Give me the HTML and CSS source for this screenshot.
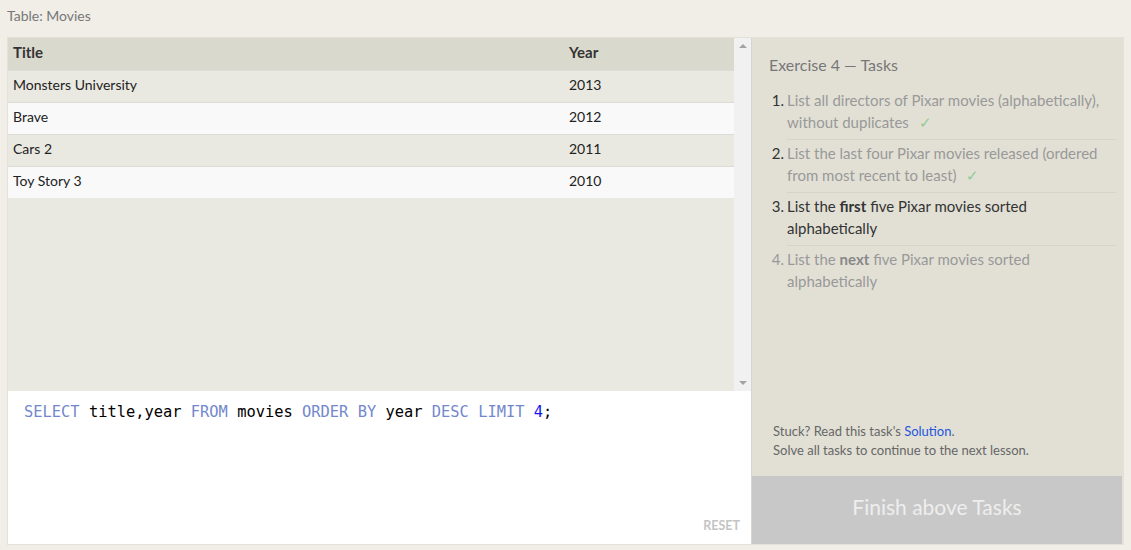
FILE: index.html
```html
<!DOCTYPE html>
<html>
<head>
<meta charset="utf-8">
<link rel="stylesheet" href="styles.css">
</head>
<body>
<div class="caption">Table: Movies</div>
<div class="main">
  <div class="left">
    <div class="table-area">
      <div class="table-scroll">
        <table class="results">
          <thead>
            <tr><th class="c-title">Title</th><th class="c-year">Year</th></tr>
          </thead>
          <tbody>
            <tr class="odd"><td>Monsters University</td><td>2013</td></tr>
            <tr class="even"><td>Brave</td><td>2012</td></tr>
            <tr class="odd"><td>Cars 2</td><td>2011</td></tr>
            <tr class="even"><td>Toy Story 3</td><td>2010</td></tr>
          </tbody>
        </table>
      </div>
      <div class="scrollbar">
        <span class="arrow up"></span>
        <span class="arrow down"></span>
      </div>
    </div>
    <div class="editor">
      <div class="code"><span class="kw">SELECT</span> title,year <span class="kw">FROM</span> movies <span class="kw">ORDER BY</span> year <span class="kw">DESC</span> <span class="kw">LIMIT</span> <span class="num">4</span>;</div>
      <div class="reset">RESET</div>
    </div>
  </div>
  <div class="right">
    <div class="tasks">
      <div class="heading">Exercise 4 — Tasks</div>
      <ol class="task-list">
        <li class="done"><span class="n">1.</span><span class="t">List all directors of Pixar movies (alphabetically), without duplicates <span class="check">✓</span></span></li>
        <li class="done"><span class="n">2.</span><span class="t">List the last four Pixar movies released (ordered from most recent to least) <span class="check">✓</span></span></li>
        <li class="current"><span class="n">3.</span><span class="t">List the <b>first</b> five Pixar movies sorted alphabetically</span></li>
        <li class="todo"><span class="n">4.</span><span class="t">List the <b>next</b> five Pixar movies sorted alphabetically</span></li>
      </ol>
    </div>
    <div class="help">
      <div>Stuck? Read this task's <a class="link">Solution</a>.</div>
      <div>Solve all tasks to continue to the next lesson.</div>
    </div>
    <div class="finish">Finish above Tasks</div>
  </div>
</div>
</body>
</html>
```

FILE: styles.css
```css
html, body {
  margin: 0;
  padding: 0;
}
body {
  background: #f0eee7;
  font-family: Lato, "Open Sans", sans-serif;
  color: #333;
  width: 1131px;
  height: 550px;
  overflow: hidden;
}
.caption {
  padding: 7px 0 0 7px;
  height: 37px;
  box-sizing: border-box;
  font-size: 14px;
  line-height: 18px;
  color: #777;
}
.main {
  margin-left: 7px;
  width: 1117px;
  height: 508px;
  box-sizing: border-box;
  border: 1px solid #e3e1d8;
  display: flex;
}
.left {
  width: 743px;
  display: flex;
  flex-direction: column;
}
.table-area {
  height: 353px;
  display: flex;
  background: #eae9e1;
}
.table-scroll {
  flex: 1;
}
.results {
  width: 726px;
  border-collapse: collapse;
  font-size: 14px;
}
.results th, .results td {
  height: 32px;
  padding: 0 5px 3px 5px;
  text-align: left;
  box-sizing: border-box;
}
.results th {
  background: #dad9cd;
  font-weight: bold;
  font-size: 15px;
  color: #333;
}
.c-title { width: 556px; }
.results td {
  border-top: 1px solid #dddcd6;
  color: #222;
}
.results tr.odd td { background: #eae9e1; }
.results tr.even td { background: #f9f9f9; }
.scrollbar {
  width: 17px;
  background: #f1f1f1;
  display: flex;
  flex-direction: column;
  justify-content: space-between;
  align-items: center;
  padding: 6px 0;
  box-sizing: border-box;
}
.arrow {
  width: 0;
  height: 0;
  border-left: 4px solid transparent;
  border-right: 4px solid transparent;
}
.arrow.up { border-bottom: 4px solid #a3a3a3; }
.arrow.down { border-top: 4px solid #a3a3a3; }
.editor {
  flex: 1;
  background: #fff;
  display: flex;
  flex-direction: column;
  justify-content: space-between;
  padding: 10px 11px 11px 16px;
}
.code {
  font-family: "DejaVu Sans Mono", monospace;
  font-size: 15.4px;
  line-height: 22px;
  color: #000;
}
.kw { color: #7388cc; }
.num { color: #1616f0; }
.reset {
  align-self: flex-end;
  font-size: 12.5px;
  font-weight: bold;
  color: #c4c4c4;
}
.right {
  flex: 1;
  background: #e2e0d5;
  border-left: 1px solid #d8d6cc;
  display: flex;
  flex-direction: column;
}
.tasks {
  flex: 1;
  padding: 16px 7px 0 17px;
}
.heading {
  font-size: 16px;
  line-height: 22px;
  color: #777;
  margin-bottom: 13px;
}
.task-list {
  list-style: none;
  margin: 0;
  padding: 0;
  font-size: 15px;
  line-height: 22px;
}
.task-list li {
  display: flex;
  margin-left: 18px;
  padding: 2px 0 6px 0;
}
.task-list li:first-child {
  padding-top: 0;
}
.task-list li + li {
  border-top: 1px solid #d6d4ca;
}
.n {
  flex: none;
  width: 18px;
  margin-left: -18px;
  padding-right: 3px;
  box-sizing: border-box;
  text-align: right;
  color: #333;
}
.t { flex: 1; }
.done .t { color: #999; }
.current .t { color: #333; }
.todo .n, .todo .t { color: #999; }
.todo b { color: #888; }
.check {
  color: #8fcc8f;
  margin-left: 6px;
}
.help {
  padding: 0 0 16px 21px;
  font-size: 13px;
  line-height: 19px;
  color: #666;
}
.link { color: #2255dd; }
.finish {
  height: 68px;
  box-sizing: border-box;
  padding-bottom: 7px;
  background: #c8c8c8;
  color: #eeeeee;
  font-size: 21px;
  display: flex;
  align-items: center;
  justify-content: center;
  border-right: 1px solid #e3e1d8;
}
```
